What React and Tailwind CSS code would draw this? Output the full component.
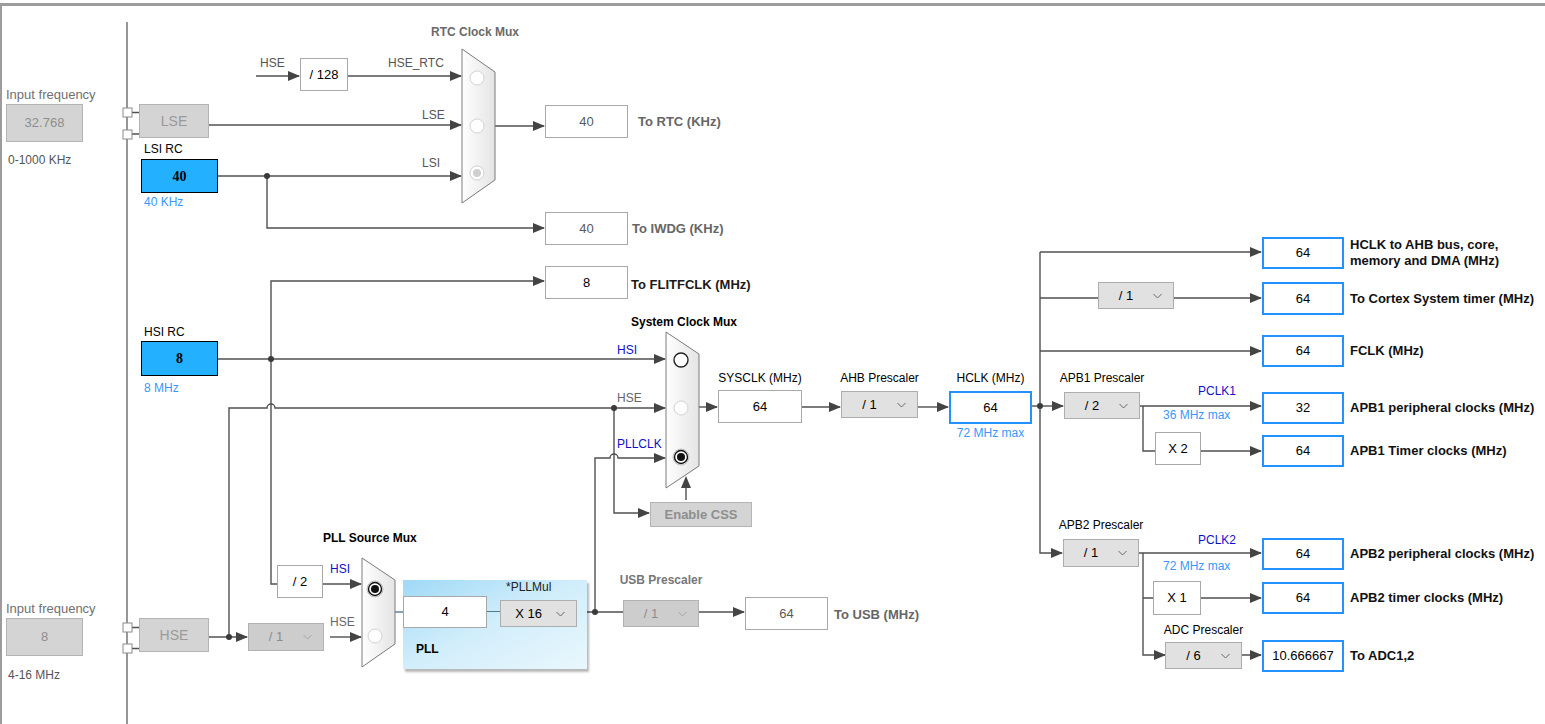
import React from 'react';

const INK = '#505050';

function Arrow({ x, y, up }) {
  if (up) return <polygon points={`${x},${y} ${x - 5},${y + 12} ${x + 5},${y + 12}`} fill="#444" />;
  return <polygon points={`${x},${y} ${x - 12},${y - 5} ${x - 12},${y + 5}`} fill="#444" />;
}

function Dot({ x, y }) {
  return <circle cx={x} cy={y} r="3" fill="#3a3a3a" />;
}

function Mux({ pts }) {
  return <polygon points={pts} fill="url(#mx)" stroke="#7a7a7a" strokeWidth="1" />;
}

function Radio({ x, y, state }) {
  if (state === 'on')
    return (
      <g>
        <circle cx={x} cy={y} r="8" fill="#fff" stroke="#bdbdbd" />
        <circle cx={x} cy={y} r="6.5" fill="#fff" stroke="#111" strokeWidth="1.4" />
        <circle cx={x} cy={y} r="4" fill="#111" />
      </g>
    );
  if (state === 'dim')
    return (
      <g>
        <circle cx={x} cy={y} r="7" fill="#fff" stroke="#cfcfcf" />
        <circle cx={x} cy={y} r="4" fill="#cfcfcf" />
      </g>
    );
  if (state === 'open') return <circle cx={x} cy={y} r="7" fill="#fff" stroke="#222" strokeWidth="1.4" />;
  return <circle cx={x} cy={y} r="7" fill="#fff" stroke="#d2d2d2" />;
}

const tones = {
  plain: 'bg-white border border-[#a8a8a8] text-[#5a5a5a]',
  dark: 'bg-white border border-[#a8a8a8] text-black',
  blue: 'bg-white border-2 border-[#2391ff] text-black',
  off: 'bg-[#d4d4d4] border border-[#b4b4b4] text-[#8e8e8e]',
  rc: "bg-[#22b0ff] border border-black text-black font-bold font-['Liberation_Serif',serif] text-[14px]",
};

// a value field; positioned by the caller (absolute on the canvas, or in a flex group)
function Box({ className = '', tone = 'plain', children }) {
  return (
    <div className={`flex shrink-0 items-center justify-center text-[13px] ${tones[tone]} ${className}`}>
      {children}
    </div>
  );
}

function Select({ className = '', value, off }) {
  return (
    <div
      className={`flex shrink-0 items-center pr-[20px] border text-[13px] ${off ? 'bg-[#cdcdcd] border-[#b2b2b2] text-[#8c8c8c]' : 'bg-[#e1e1e1] border-[#adadad] text-black'} ${className}`}
    >
      <span className="flex-1 text-center whitespace-nowrap">{value}</span>
      <svg width="9" height="6" viewBox="0 0 9 6" className="shrink-0 mr-[-9px]">
        <polyline points="0.5,1 4.5,5 8.5,1" fill="none" stroke={off ? '#a5a5a5' : '#666'} strokeWidth="1" />
      </svg>
    </div>
  );
}

function T({ className = '', children }) {
  return <div className={`whitespace-nowrap text-[12px] leading-[14px] ${className}`}>{children}</div>;
}

// box + caption to its right
function Out({ className, box, gap = 'gap-[6px]', label, labelClass = 'font-bold text-[#111] text-[13px] leading-[16px]' }) {
  return (
    <div className={`absolute flex items-center ${gap} ${className}`}>
      {box}
      <div className={`whitespace-nowrap ${labelClass}`}>{label}</div>
    </div>
  );
}

export default function App() {
  return (
    <div className="relative w-[1545px] h-[724px] bg-white overflow-hidden font-['Liberation_Sans',Arial,sans-serif]">
      <div className="mt-[3px] h-[721px] border-t-[3px] border-l-2 border-[#9c9c9c]" />

      <svg className="absolute inset-0" width="1545" height="724" viewBox="0 0 1545 724">
        <defs>
          <linearGradient id="mx" x1="0" x2="1" y1="0" y2="0">
            <stop offset="0" stopColor="#ffffff" />
            <stop offset="1" stopColor="#e4e4e4" />
          </linearGradient>
        </defs>
        <g fill="none" stroke={INK} strokeWidth="1.4">
          <path d="M127 22 V724" stroke="#6a6a6a" />
          <path d="M132 112.5 H139 M132 134 H139 M132 627.5 H139 M132 648.5 H139" />
          <path d="M256 76 H299" />
          <path d="M348 76 H461" />
          <path d="M209 125 H461" />
          <path d="M218 176 H461" />
          <path d="M267 176 V228 H544" />
          <path d="M495 126 H544" />
          <path d="M277 584 H271 V281 H544" />
          <path d="M218 359 H665" />
          <path d="M209 637 H247" />
          <path d="M229 637 V408 H267 A4 4 0 0 1 275 408 H665" />
          <path d="M614 408 V513 H649" />
          <path d="M330 637 H361" />
          <path d="M323 584 H361" />
          <path d="M395 612 H403" stroke="#4d7f8f" />
          <path d="M577 612 H623" />
          <path d="M595 612 V458 H610 A4 4 0 0 1 618 458 H665" />
          <path d="M699 612 H744" />
          <path d="M686 500 V478" />
          <path d="M699 407 H717" />
          <path d="M802 407 H840" />
          <path d="M918 407 H948" />
          <path d="M1032 406 H1063" />
          <path d="M1040 252 V553 H1062" />
          <path d="M1040 252 H1261" />
          <path d="M1040 298 H1098 M1174 298 H1261" />
          <path d="M1040 351 H1261" />
          <path d="M1140 406 H1261 M1143 406 V451 H1155 M1201 451 H1261" />
          <path d="M1139 553 H1261 M1143 553 V655 H1165 M1143 598 H1153 M1201 598 H1261 M1242 655 H1261" />
        </g>
        <g fill="#fff" stroke="#8a8a8a">
          <rect x="123" y="108" width="9" height="9" />
          <rect x="123" y="130" width="9" height="9" />
          <rect x="123" y="623" width="9" height="9" />
          <rect x="123" y="644" width="9" height="9" />
        </g>

        <Arrow x={300} y={76} />
        <Arrow x={462} y={76} />
        <Arrow x={462} y={125} />
        <Arrow x={462} y={176} />
        <Arrow x={545} y={228} />
        <Arrow x={545} y={126} />
        <Arrow x={545} y={281} />
        <Arrow x={666} y={359} />
        <Arrow x={248} y={637} />
        <Arrow x={666} y={408} />
        <Arrow x={650} y={513} />
        <Arrow x={362} y={637} />
        <Arrow x={362} y={584} />
        <Arrow x={666} y={458} />
        <Arrow x={745} y={612} />
        <Arrow x={686} y={476} up />
        <Arrow x={718} y={407} />
        <Arrow x={841} y={407} />
        <Arrow x={949} y={407} />
        <Arrow x={1064} y={406} />
        <Arrow x={1063} y={553} />
        <Arrow x={1262} y={252} />
        <Arrow x={1262} y={298} />
        <Arrow x={1262} y={351} />
        <Arrow x={1262} y={406} />
        <Arrow x={1262} y={451} />
        <Arrow x={1262} y={553} />
        <Arrow x={1262} y={598} />
        <Arrow x={1166} y={655} />
        <Arrow x={1262} y={655} />

        <Dot x={267} y={176} />
        <Dot x={271} y={359} />
        <Dot x={229} y={637} />
        <Dot x={614} y={408} />
        <Dot x={595} y={612} />
        <Dot x={1040} y={406} />

        <Mux pts="462,49 495,72 495,180 462,203" />
        <Radio x={477} y={78} />
        <Radio x={477} y={126} />
        <Radio x={477} y={173} state="dim" />

        <Mux pts="666,332 699,354 699,466 666,488" />
        <Radio x={681} y={360} state="open" />
        <Radio x={681} y={408} />
        <Radio x={681} y={457} state="on" />

        <Mux pts="362,558 395,580 395,644 362,667" />
        <Radio x={375} y={589} state="on" />
        <Radio x={375} y={636} />
      </svg>

      {/* input frequencies */}
      <div className="absolute left-[6px] top-[87px] flex flex-col items-start">
        <T className="text-[13px] leading-[15px] text-[#707070]">Input frequency</T>
        <Box tone="off" className="mt-[2px] w-[77px] h-[38px]">32.768</Box>
        <T className="mt-[11px] ml-[2px] text-[#555]">0-1000 KHz</T>
      </div>
      <div className="absolute left-[6px] top-[601px] flex flex-col items-start">
        <T className="text-[13px] leading-[15px] text-[#707070]">Input frequency</T>
        <Box tone="off" className="mt-[2px] w-[77px] h-[38px]">8</Box>
        <T className="mt-[12px] ml-[2px] text-[#555]">4-16 MHz</T>
      </div>

      {/* oscillators */}
      <Box tone="off" className="absolute left-[139px] top-[104px] w-[70px] h-[34px] text-[14px] text-[#9a9a9a]">LSE</Box>
      <div className="absolute left-[141px] top-[142px] flex flex-col items-start">
        <T className="ml-[3px] text-black">LSI RC</T>
        <Box tone="rc" className="mt-[3px] w-[77px] h-[34px]">40</Box>
        <T className="mt-[2px] ml-[3px] text-[#3797ff]">40 KHz</T>
      </div>
      <div className="absolute left-[141px] top-[325px] flex flex-col items-start">
        <T className="ml-[3px] text-black">HSI RC</T>
        <Box tone="rc" className="mt-[2px] w-[77px] h-[35px]">8</Box>
        <T className="mt-[5px] ml-[3px] text-[#3797ff]">8 MHz</T>
      </div>
      <Box tone="off" className="absolute left-[139px] top-[618px] w-[70px] h-[34px] text-[14px] text-[#9a9a9a]">HSE</Box>

      {/* RTC */}
      <T className="absolute left-[431px] top-[25px] font-bold text-[#6a6a6a]">RTC Clock Mux</T>
      <T className="absolute left-[260px] top-[56px] text-[#555]">HSE</T>
      <Box tone="dark" className="absolute left-[300px] top-[58px] w-[48px] h-[33px]">/ 128</Box>
      <T className="absolute left-[388px] top-[56px] text-[#555]">HSE_RTC</T>
      <T className="absolute left-[422px] top-[108px] text-[#555]">LSE</T>
      <T className="absolute left-[422px] top-[156px] text-[#555]">LSI</T>
      <Out className="left-[545px] top-[105px]" gap="gap-[10px]" labelClass="font-bold text-[#666] text-[13px]"
        box={<Box className="w-[83px] h-[33px]">40</Box>} label="To RTC (KHz)" />
      <Out className="left-[545px] top-[212px]" gap="gap-[4px]" labelClass="font-bold text-[#666] text-[13px]"
        box={<Box className="w-[83px] h-[33px]">40</Box>} label="To IWDG (KHz)" />
      <Out className="left-[545px] top-[266px]" gap="gap-[3px]" labelClass="font-bold text-[#1a1a1a] text-[13px] mt-[4px]"
        box={<Box tone="dark" className="w-[83px] h-[33px]">8</Box>} label="To FLITFCLK (MHz)" />

      {/* system clock mux */}
      <T className="absolute left-[631px] top-[315px] font-bold text-black">System Clock Mux</T>
      <T className="absolute left-[617px] top-[343px] text-[#1010c8]">HSI</T>
      <T className="absolute left-[617px] top-[391px] text-[#666]">HSE</T>
      <T className="absolute left-[617px] top-[437px] text-[#1010c8]">PLLCLK</T>
      <Box tone="off" className="absolute left-[650px] top-[502px] w-[102px] h-[25px] font-bold text-[12px] text-[#8a8a8a]">Enable CSS</Box>
      <div className="absolute left-[718px] top-[371px] w-[84px] flex flex-col items-center gap-[5px]">
        <T className="text-black">SYSCLK (MHz)</T>
        <Box tone="dark" className="w-[84px] h-[33px]">64</Box>
      </div>
      <div className="absolute left-[841px] top-[371px] w-[77px] flex flex-col items-center gap-[6px]">
        <T className="text-black">AHB Prescaler</T>
        <Select className="w-[77px] h-[27px]" value="/ 1" />
      </div>
      <div className="absolute left-[949px] top-[371px] w-[83px] flex flex-col items-center">
        <T className="text-black">HCLK (MHz)</T>
        <Box tone="blue" className="mt-[6px] w-[83px] h-[33px]">64</Box>
        <T className="mt-[2px] text-[#3797ff]">72 MHz max</T>
      </div>

      {/* PLL */}
      <T className="absolute left-[323px] top-[531px] font-bold text-black">PLL Source Mux</T>
      <Box tone="dark" className="absolute left-[277px] top-[565px] w-[46px] h-[33px]">/ 2</Box>
      <T className="absolute left-[330px] top-[562px] text-[#1010c8]">HSI</T>
      <T className="absolute left-[330px] top-[615px] text-[#666]">HSE</T>
      <Select off className="absolute left-[248px] top-[623px] w-[76px] h-[28px]" value="/ 1" />
      <div className="absolute left-[403px] top-[580px] w-[184px] h-[89px] flex flex-col bg-gradient-to-br from-[#9fd9f6] via-[#d2eefb] to-[#e9f7fd] shadow-[2px_3px_2px_rgba(0,0,0,0.28)]">
        <div className="flex items-end">
          <Box tone="dark" className="w-[84px] h-[32px] border-[#9a9a9a]">4</Box>
          <div className="w-[13px] h-px mb-[16px] bg-[#4d7f8f]" />
          <div className="flex flex-col items-start">
            <T className="ml-[6px] mb-[6px] text-[#222]">*PLLMul</T>
            <Select className="w-[77px] h-[27px] mb-px" value="X 16" />
          </div>
        </div>
        <T className="mt-[14px] ml-[13px] font-bold text-black">PLL</T>
      </div>

      {/* USB */}
      <div className="absolute left-[623px] top-[573px] w-[76px] flex flex-col items-center gap-[13px]">
        <T className="font-bold text-[#777]">USB Prescaler</T>
        <Select off className="w-[76px] h-[27px]" value="/ 1" />
      </div>
      <Out className="left-[745px] top-[597px]" labelClass="font-bold text-[#666] text-[13px] mt-[2px]"
        box={<Box className="w-[83px] h-[33px]">64</Box>} label="To USB (MHz)" />

      {/* AHB / APB outputs */}
      <Out className="left-[1262px] top-[237px]" box={<Box tone="blue" className="w-[82px] h-[32px]">64</Box>}
        label={<>HCLK to AHB bus, core,<br />memory and DMA (MHz)</>} />
      <Select className="absolute left-[1098px] top-[282px] w-[76px] h-[27px]" value="/ 1" />
      <Out className="left-[1262px] top-[282px]" box={<Box tone="blue" className="w-[82px] h-[33px]">64</Box>}
        label="To Cortex System timer (MHz)" />
      <Out className="left-[1262px] top-[335px]" box={<Box tone="blue" className="w-[82px] h-[32px]">64</Box>}
        label="FCLK (MHz)" />

      <div className="absolute left-[1064px] top-[371px] w-[76px] flex flex-col items-center gap-[7px]">
        <T className="text-black">APB1 Prescaler</T>
        <Select className="w-[76px] h-[27px]" value="/ 2" />
      </div>
      <T className="absolute left-[1198px] top-[384px] text-[#1010c8]">PCLK1</T>
      <T className="absolute left-[1163px] top-[408px] text-[#3797ff]">36 MHz max</T>
      <Out className="left-[1262px] top-[392px]" box={<Box tone="blue" className="w-[82px] h-[32px]">32</Box>}
        label="APB1 peripheral clocks (MHz)" />
      <Box tone="dark" className="absolute left-[1155px] top-[432px] w-[46px] h-[33px]">X 2</Box>
      <Out className="left-[1262px] top-[435px]" box={<Box tone="blue" className="w-[82px] h-[32px]">64</Box>}
        label="APB1 Timer clocks (MHz)" />

      <div className="absolute left-[1063px] top-[518px] w-[76px] flex flex-col items-center gap-[7px]">
        <T className="text-black">APB2 Prescaler</T>
        <Select className="w-[76px] h-[28px]" value="/ 1" />
      </div>
      <T className="absolute left-[1198px] top-[533px] text-[#1010c8]">PCLK2</T>
      <T className="absolute left-[1163px] top-[559px] text-[#3797ff]">72 MHz max</T>
      <Out className="left-[1262px] top-[538px]" box={<Box tone="blue" className="w-[82px] h-[32px]">64</Box>}
        label="APB2 peripheral clocks (MHz)" />
      <Box tone="dark" className="absolute left-[1153px] top-[581px] w-[48px] h-[34px]">X 1</Box>
      <Out className="left-[1262px] top-[582px]" box={<Box tone="blue" className="w-[82px] h-[32px]">64</Box>}
        label="APB2 timer clocks (MHz)" />
      <div className="absolute left-[1165px] top-[623px] w-[77px] flex flex-col items-center gap-[5px]">
        <T className="text-black">ADC Prescaler</T>
        <Select className="w-[77px] h-[27px]" value="/ 6" />
      </div>
      <Out className="left-[1262px] top-[640px]" box={<Box tone="blue" className="w-[82px] h-[32px]">10.666667</Box>}
        label="To ADC1,2" />
    </div>
  );
}
